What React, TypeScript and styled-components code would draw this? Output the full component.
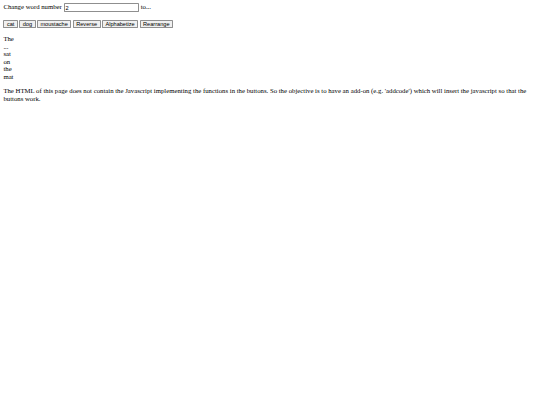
import styled, { createGlobalStyle } from "styled-components";

const GlobalStyle = createGlobalStyle`
  html, body {
    margin: 0;
    padding: 0;
    background: #fff;
  }
`;

// the reference is a 1280px wide page shrunk to 540px
const Page = styled.div`
  zoom: 0.421875;
  width: 1264px;
  padding: 8px;
  font-family: "Liberation Serif", "Times New Roman", serif;
  font-size: 16px;
  line-height: 18px;
  color: #000;
`;

const WordInput = styled.input`
  width: 170px;
  font-family: "Liberation Sans", Arial, sans-serif;
  font-size: 13.33px;
  line-height: normal;
  padding: 1px 2px;
  border: 1px solid #8f8f8f;
  border-radius: 2px;
  margin: 0;
`;

const Button = styled.button`
  font-family: "Liberation Sans", Arial, sans-serif;
  font-size: 13.33px;
  line-height: normal;
  padding: 0 6px;
  margin: 0 3px 0 0;
  background: #f0f0f0;
  color: #000;
  border: 1px solid #8f8f8f;
  border-radius: 2px;
  vertical-align: middle;
`;

const WordList = styled.div`
  margin-top: -2px;
`;

const Note = styled.p`
  margin: 16px 0;
`;

const words = ["The", "...", "sat", "on", "the", "mat"];
const buttons = ["cat", "dog", "moustache", "Reverse", "Alphabetize", "Rearrange"];

const App = () => {
  return (
    <Page>
      <GlobalStyle />
      Change word number <WordInput defaultValue="2" /> to...
      <br />
      <br />
      {buttons.map((b) => (
        <Button key={b}>{b}</Button>
      ))}
      <br />
      <br />
      <WordList>
        {words.map((w, i) => (
          <div key={i}>{w}</div>
        ))}
      </WordList>
      <Note>
        The HTML of this page does not contain the Javascript implementing the
        functions in the buttons. So the objective is to have an add-on (e.g.
        'addcode') which will insert the javascript so that the buttons work.
      </Note>
    </Page>
  );
};

export default App;
